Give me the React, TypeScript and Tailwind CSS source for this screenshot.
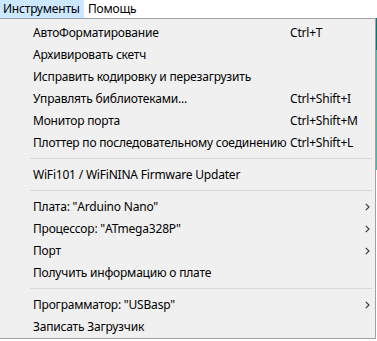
import React from 'react';

type Item =
  | { kind: 'item'; label: string; shortcut?: string; sub?: boolean }
  | { kind: 'sep' };

const items: Item[] = [
  { kind: 'item', label: 'АвтоФорматирование', shortcut: 'Ctrl+T' },
  { kind: 'item', label: 'Архивировать скетч' },
  { kind: 'item', label: 'Исправить кодировку и перезагрузить' },
  { kind: 'item', label: 'Управлять библиотеками...', shortcut: 'Ctrl+Shift+I' },
  { kind: 'item', label: 'Монитор порта', shortcut: 'Ctrl+Shift+M' },
  { kind: 'item', label: 'Плоттер по последовательному соединению', shortcut: 'Ctrl+Shift+L' },
  { kind: 'sep' },
  { kind: 'item', label: 'WiFi101 / WiFiNINA Firmware Updater' },
  { kind: 'sep' },
  { kind: 'item', label: 'Плата: "Arduino Nano"', sub: true },
  { kind: 'item', label: 'Процессор: "ATmega328P"', sub: true },
  { kind: 'item', label: 'Порт', sub: true },
  { kind: 'item', label: 'Получить информацию о плате' },
  { kind: 'sep' },
  { kind: 'item', label: 'Программатор: "USBasp"', sub: true },
  { kind: 'item', label: 'Записать Загрузчик' },
];

function Chevron() {
  return (
    <svg width="5" height="8" viewBox="0 0 5 8" className="text-[#333]">
      <path d="M0.8 0.8 L4 4 L0.8 7.2" fill="none" stroke="currentColor" strokeWidth="1.1" />
    </svg>
  );
}

export default function App() {
  return (
    <div
      className="w-[377px] h-[341px] bg-white overflow-hidden text-[12px] tracking-[-0.2px] text-black"
      style={{ fontFamily: '"Segoe UI", "Noto Sans", "Open Sans", sans-serif' }}
    >
      {/* menu bar */}
      <div className="h-[18px] flex items-stretch">
        <div className="w-[84px] bg-[#cce8ff] pl-[3px] leading-[18px]">Инструменты</div>
        <div className="pl-[4px] leading-[18px]">Помощь</div>
      </div>

      <div className="flex">
        {/* dropdown */}
        <div className="w-[376px] bg-[#f0f0f0] border-t border-r border-b border-[#a0a0a0] pt-[3px]">
          {items.map((it, i) =>
            it.kind === 'sep' ? (
              <div key={i} className="h-[10px] pt-[4px] pl-[30px] pr-[3px]">
                <div className="h-px bg-[#d7d7d7]" />
              </div>
            ) : (
              <div key={i} className="h-[22px] flex items-center pl-[33px]">
                <div className="w-[257px] whitespace-nowrap">{it.label}</div>
                <div className="flex-1 flex items-center whitespace-nowrap">
                  {it.shortcut}
                  {it.sub && (
                    <div className="ml-auto pr-[5px] flex items-center">
                      <Chevron />
                    </div>
                  )}
                </div>
              </div>
            ),
          )}
        </div>
        <div className="w-px flex flex-col">
          <div className="h-[32px] bg-[#00787c]" />
          <div className="h-[120px] bg-[#4db6ac]" />
        </div>
      </div>
    </div>
  );
}
